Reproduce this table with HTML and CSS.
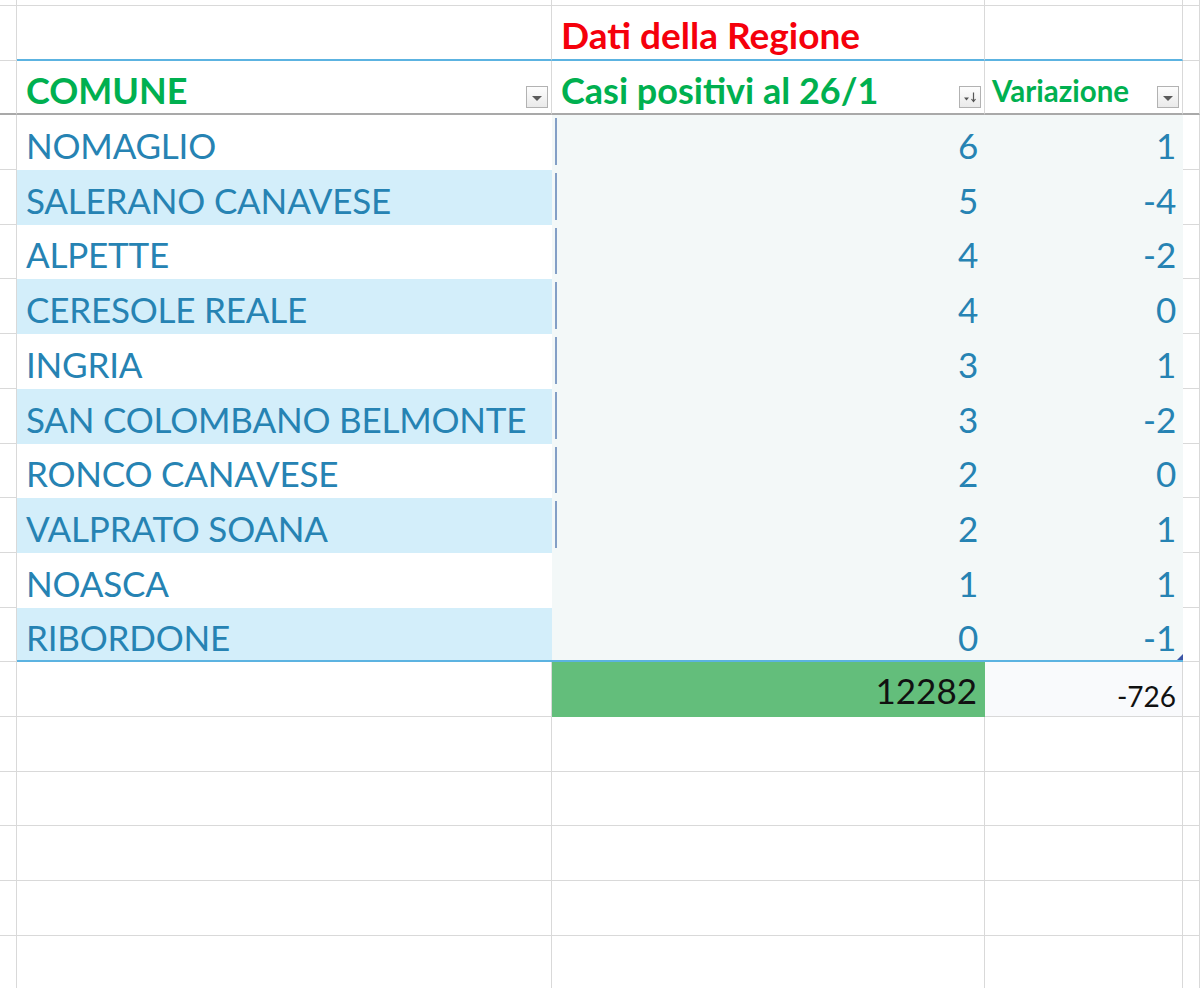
FILE: index.html
```html
<!DOCTYPE html>
<html lang="it">
<head>
<meta charset="utf-8">
<title>Casi positivi</title>
<link rel="stylesheet" href="styles.css">
</head>
<body>
<div class="sheet">
  <!-- row 0 (partial) -->
  <div class="c"></div><div class="c"></div><div class="c"></div><div class="c"></div><div class="c"></div>

  <!-- row 1 -->
  <div class="c"></div>
  <div class="c tb"></div>
  <div class="c tb title"><span class="red">Dati della Regione</span></div>
  <div class="c tb"></div>
  <div class="c"></div>

  <!-- row 2 header -->
  <div class="c fz"></div>
  <div class="c fz hd"><span class="hname">COMUNE</span><span class="fbtn"><i class="tri"></i></span></div>
  <div class="c fz hd"><span class="hname">Casi positivi al 26/1</span><span class="fbtn sort"><svg width="18" height="18" viewBox="0 0 18 18"><path d="M3 9.5h5l-2.5 3z" fill="#555"/><path d="M12.5 4.5v8.5" stroke="#555" stroke-width="1.2"/><path d="M10.5 11l2 2.5 2-2.5" fill="none" stroke="#555" stroke-width="1.2"/></svg></span></div>
  <div class="c fz hd hsmall"><span class="hname">Variazione</span><span class="fbtn"><i class="tri"></i></span></div>
  <div class="c fz"></div>

  <!-- data rows -->
  <div class="c"></div><div class="d name">NOMAGLIO</div><div class="d num bar">6</div><div class="d num">1</div><div class="c"></div>
  <div class="c"></div><div class="d name band">SALERANO CANAVESE</div><div class="d num bar">5</div><div class="d num">-4</div><div class="c"></div>
  <div class="c"></div><div class="d name">ALPETTE</div><div class="d num bar">4</div><div class="d num">-2</div><div class="c"></div>
  <div class="c"></div><div class="d name band">CERESOLE REALE</div><div class="d num bar">4</div><div class="d num">0</div><div class="c"></div>
  <div class="c"></div><div class="d name">INGRIA</div><div class="d num bar">3</div><div class="d num">1</div><div class="c"></div>
  <div class="c"></div><div class="d name band">SAN COLOMBANO BELMONTE</div><div class="d num bar">3</div><div class="d num">-2</div><div class="c"></div>
  <div class="c"></div><div class="d name">RONCO CANAVESE</div><div class="d num bar">2</div><div class="d num">0</div><div class="c"></div>
  <div class="c"></div><div class="d name band">VALPRATO SOANA</div><div class="d num bar">2</div><div class="d num">1</div><div class="c"></div>
  <div class="c"></div><div class="d name">NOASCA</div><div class="d num">1</div><div class="d num">1</div><div class="c"></div>
  <div class="c"></div><div class="d name band last">RIBORDONE</div><div class="d num last">0</div><div class="d num last corner">-1</div><div class="c"></div>

  <!-- total row -->
  <div class="c"></div>
  <div class="c"></div>
  <div class="c tot-green">12282</div>
  <div class="c tot-var">-726</div>
  <div class="c"></div>

  <!-- empty rows -->
  <div class="c"></div><div class="c"></div><div class="c"></div><div class="c"></div><div class="c"></div>
  <div class="c"></div><div class="c"></div><div class="c"></div><div class="c"></div><div class="c"></div>
  <div class="c"></div><div class="c"></div><div class="c"></div><div class="c"></div><div class="c"></div>
  <div class="c"></div><div class="c"></div><div class="c"></div><div class="c"></div><div class="c"></div>
  <div class="c"></div><div class="c"></div><div class="c"></div><div class="c"></div><div class="c"></div>
</div>
</body>
</html>
```

FILE: styles.css
```css
html, body {
  margin: 0;
  padding: 0;
  background: #fff;
  overflow: hidden;
}

.sheet {
  display: grid;
  grid-template-columns: 17px 535px 433px 198px 17px;
  grid-template-rows: 6px repeat(18, 54.7px);
  font-family: Lato, "Open Sans", sans-serif;
}

.c, .d {
  box-sizing: border-box;
  min-width: 0;
  overflow: hidden;
  white-space: nowrap;
}

.c {
  border-right: 1px solid #d9d9d9;
  border-bottom: 1px solid #d9d9d9;
}

/* table top border (blue) */
.tb {
  border-bottom: 2px solid #5cb3e1;
}

.title {
  display: flex;
  align-items: flex-end;
  padding: 0 0 6px 9px;
}

.red {
  color: #f5000b;
  font-weight: 700;
  font-size: 37px;
  letter-spacing: 0;
  line-height: 1;
}

/* freeze pane line */
.fz {
  border-bottom: 2px solid #a9a9a9;
}

.hd {
  display: flex;
  align-items: flex-end;
  justify-content: space-between;
  padding: 0 3px 5px 9px;
}

.hname {
  color: #00b050;
  font-weight: 700;
  font-size: 36px;
  letter-spacing: 0;
  line-height: 1;
}

.hsmall {
  padding-left: 7px;
}

.hsmall .hname {
  font-size: 29.5px;
  padding-bottom: 3px;
}

.fbtn {
  box-sizing: border-box;
  width: 22px;
  height: 22px;
  border: 1px solid #b2b2b2;
  background: linear-gradient(#fdfdfd, #eaeaea);
  display: flex;
  align-items: center;
  justify-content: center;
  flex: none;
  margin-bottom: 0;
}

.tri {
  width: 0;
  height: 0;
  border-left: 5px solid transparent;
  border-right: 5px solid transparent;
  border-top: 5px solid #5a5a5a;
  margin-top: 3px;
}

/* data cells */
.d {
  display: flex;
  align-items: flex-end;
  font-size: 35px;
  letter-spacing: -0.2px;
  line-height: 1;
  color: #2683b3;
  padding-bottom: 7px;
}

.name {
  padding-left: 9px;
  background: #fff;
}

.name.band {
  background: #d3eefa;
}

.num {
  justify-content: flex-end;
  padding-right: 7px;
  background: #f3f8f8;
}

.num.bar {
  background: linear-gradient(#839fc6, #839fc6) no-repeat 3px 3px / 2px calc(100% - 8px), #f3f8f8;
}

.last {
  border-bottom: 2px solid #5cb3e1;
  padding-bottom: 5px;
}

.corner {
  position: relative;
}

.corner::after {
  content: "";
  position: absolute;
  right: 0;
  bottom: 0;
  width: 0;
  height: 0;
  border-left: 6px solid transparent;
  border-bottom: 6px solid #3b55a6;
}

/* totals */
.tot-green {
  background: #63be7b;
  border-color: #63be7b;
  display: flex;
  align-items: flex-end;
  justify-content: flex-end;
  padding: 0 7px 8px 0;
  font-size: 35px;
  line-height: 1;
  color: #111;
}

.tot-var {
  background: #f9fafc;
  display: flex;
  align-items: flex-end;
  justify-content: flex-end;
  padding: 0 6px 6px 0;
  font-size: 28px;
  line-height: 1;
  color: #111;
}
```
